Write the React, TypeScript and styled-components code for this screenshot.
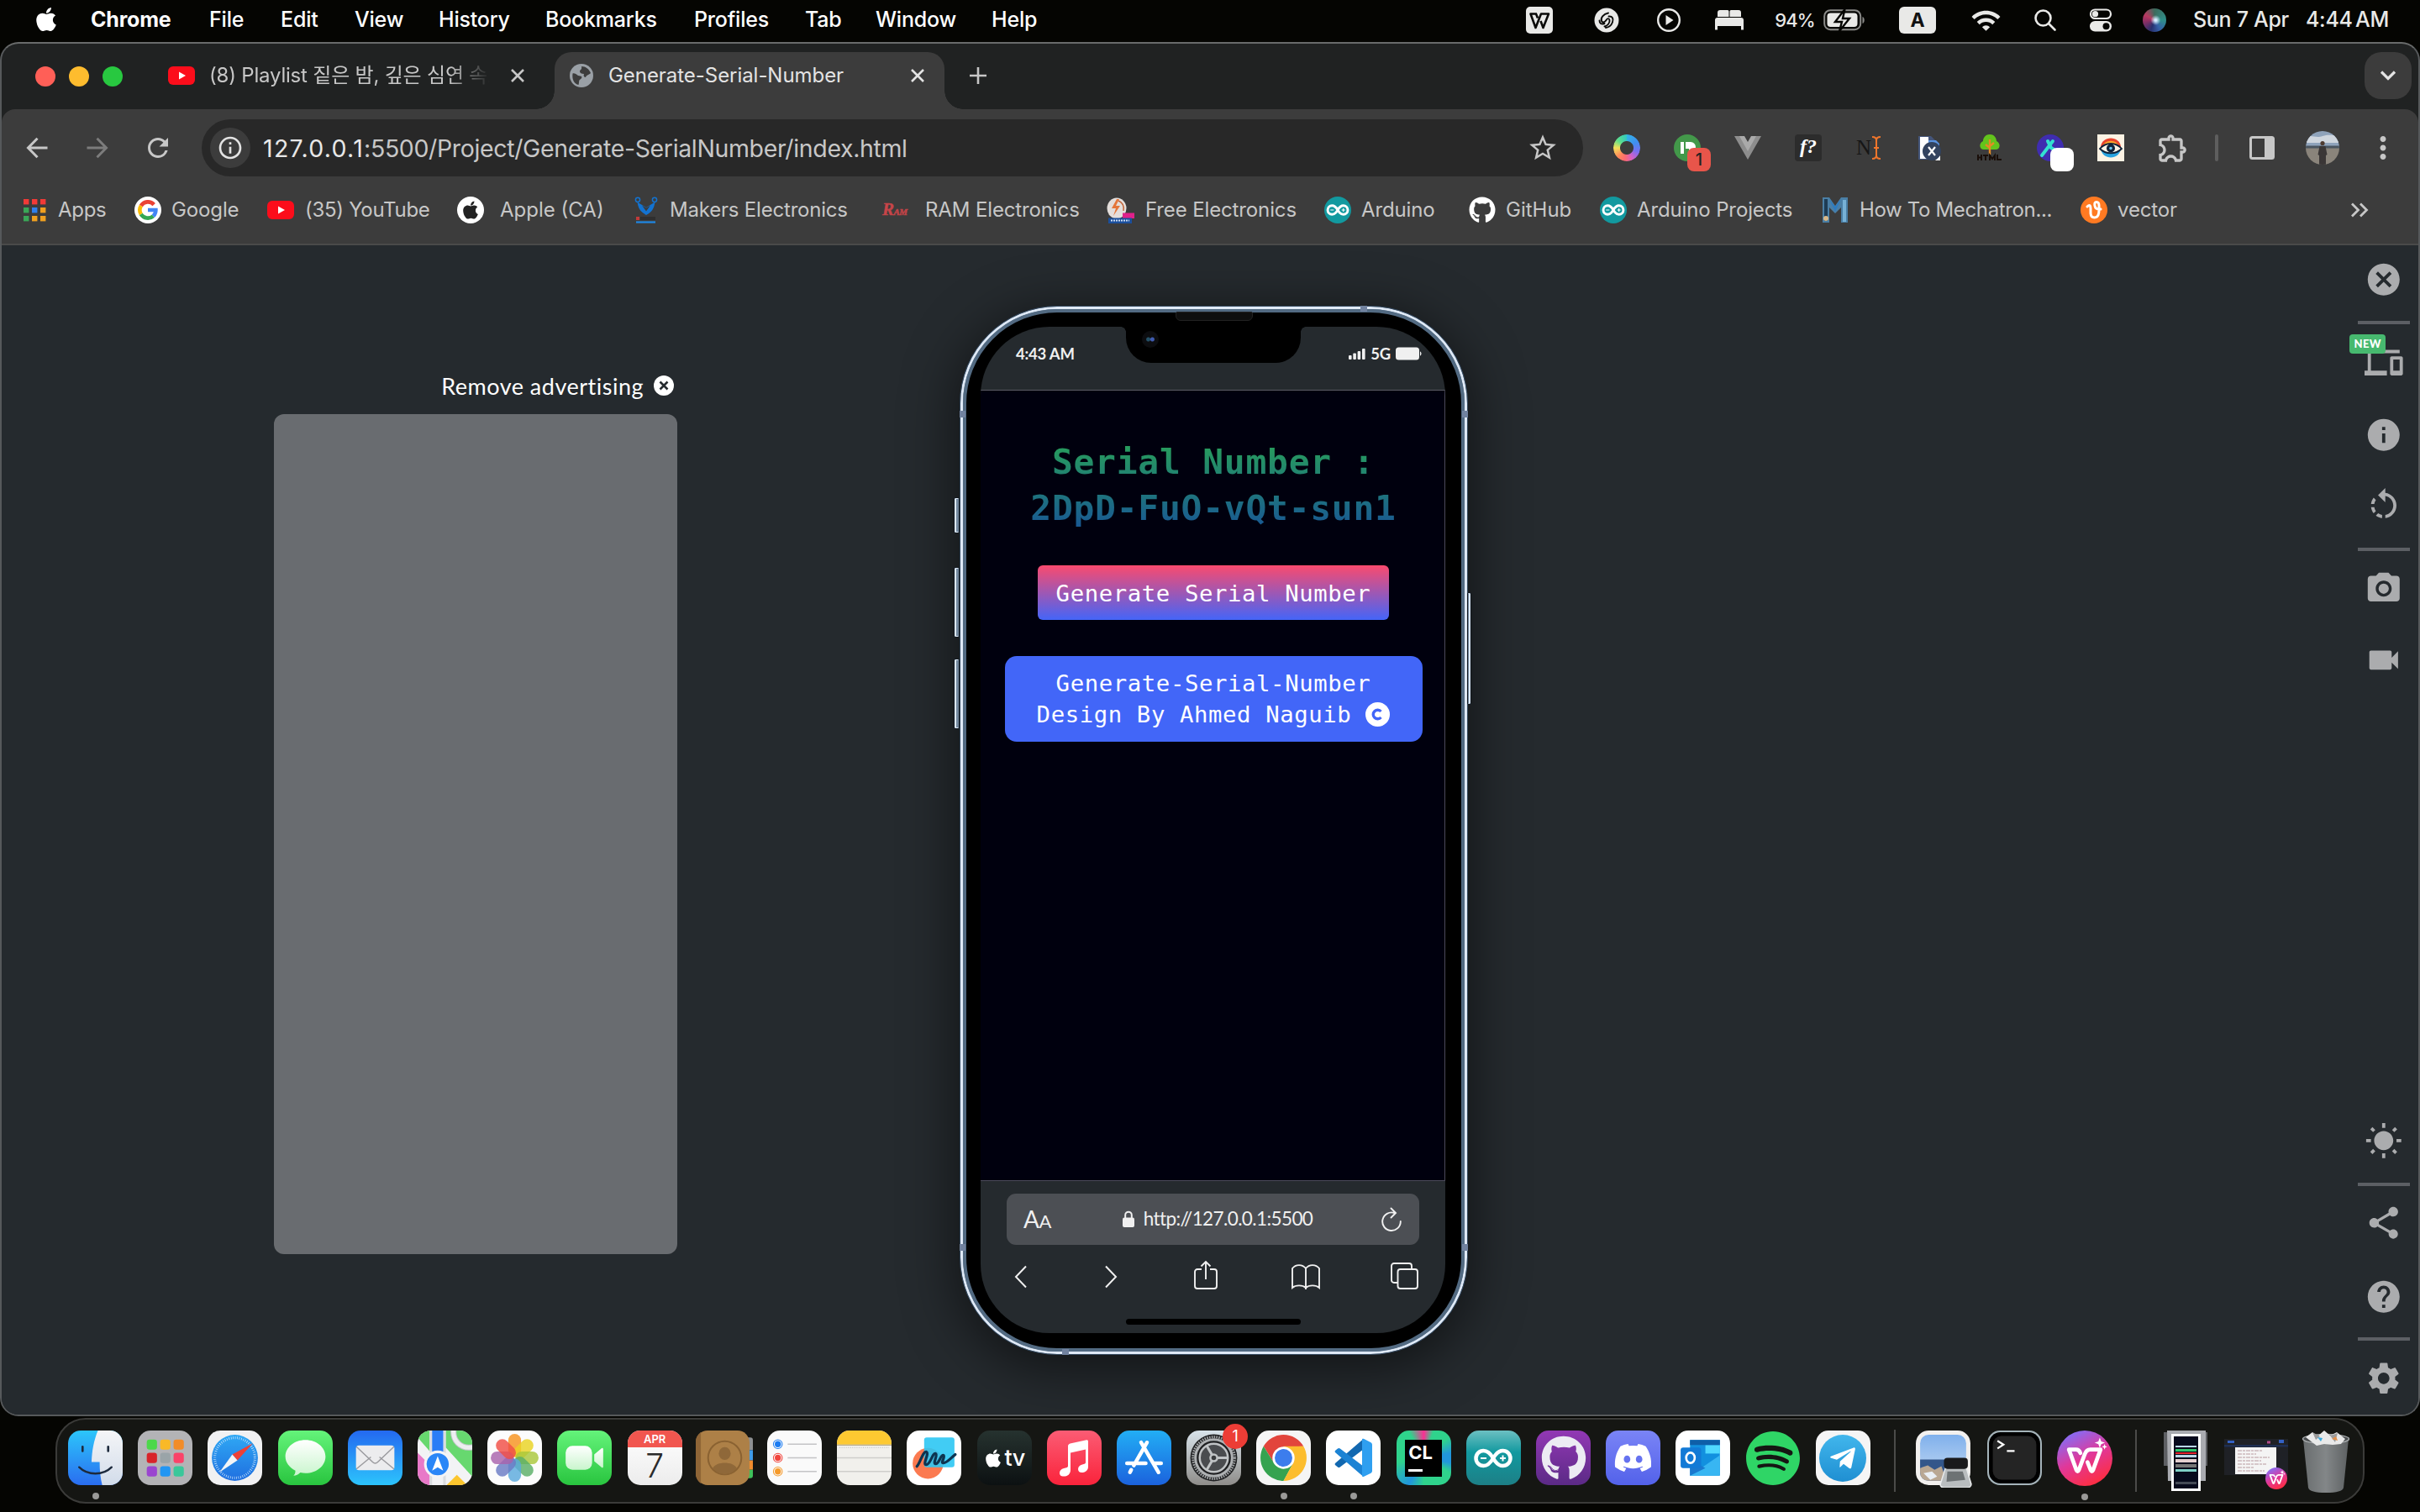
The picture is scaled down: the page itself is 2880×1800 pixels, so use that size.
import React from 'react';
import styled, { createGlobalStyle, css } from 'styled-components';
import { FaApple, FaGithub, FaDiscord, FaSpotify, FaTelegramPlane } from 'react-icons/fa';
import {
  MdCancel, MdDevices, MdInfo, MdRotateLeft, MdPhotoCamera, MdVideocam, MdWbSunny, MdShare,
  MdHelp, MdSettings, MdStarBorder, MdOutlineInfo, MdRefresh,
  MdMoreVert, MdOutlineExtension, MdWifi,
} from 'react-icons/md';

const GlobalStyle = createGlobalStyle`
  * { box-sizing: border-box; }
  html, body { margin: 0; background: #050502; }
  body { width: 2880px; height: 1800px; overflow: hidden; font-family: Inter, "Noto Sans CJK KR", sans-serif; }
  svg { display: block; flex: none; }
`;

const SANS = 'Inter, "Noto Sans CJK KR", sans-serif';
const AVENIR = 'Lato, "Open Sans", sans-serif';
const MONO = '"DejaVu Sans Mono", "Liberation Mono", monospace';

const Desktop = styled.div`
  width: 2880px;
  height: 1800px;
  display: flex;
  flex-direction: column;
  background: #050502;
  font-family: ${SANS};
`;

/* ---------- menu bar ---------- */

const MenuBar = styled.header`
  height: 50px;
  display: flex;
  justify-content: space-between;
  color: #fff;
`;
const MenuLeft = styled.nav`
  display: flex;
  align-items: center;
  height: 46px;
  padding-left: 39px;
`;
const MenuLogo = styled.div`
  width: 69px;
`;
const MenuItem = styled.span<{ $w: number; $bold?: boolean }>`
  width: ${p => p.$w}px;
  font-size: 25px;
  white-space: nowrap;
  font-weight: ${p => (p.$bold ? 700 : 500)};
  letter-spacing: -0.2px;
`;
const MenuRight = styled.div`
  display: flex;
  align-items: center;
  height: 48px;
  width: 1088px;
  color: #e9e9e7;
`;
const Slot = styled.div<{ $w: number }>`
  width: ${p => p.$w}px;
  flex: none;
  display: flex;
  align-items: center;
  justify-content: center;
`;
const Percent = styled.span`
  font-size: 22px;
  font-weight: 500;
  letter-spacing: -0.9px;
  padding-left: 8px;
`;
const InputBadge = styled.span`
  width: 44px;
  height: 32px;
  border-radius: 6px;
  background: #e9e9e7;
  color: #111;
  font-size: 23px;
  font-weight: 700;
  text-align: center;
  line-height: 33px;
`;
const Clock = styled.span<{ $w: number; $ws?: number }>`
  width: ${p => p.$w}px;
  padding-bottom: 2px;
  font-size: 25px;
  font-weight: 500;
  white-space: nowrap;
  letter-spacing: -0.3px;
  word-spacing: ${p => p.$ws ?? 0}px;
`;

/* ---------- browser window ---------- */

const BrowserWindow = styled.main`
  height: 1636px;
  border: 2px solid #56595b;
  border-top-color: #696b6b;
  border-radius: 22px;
  overflow: hidden;
  background: #202222;
  display: flex;
  flex-direction: column;
`;
const TabStrip = styled.div`
  height: 78px;
  flex: none;
  display: flex;
  padding-left: 40px;
  padding-right: 8px;
`;
const Lights = styled.div`
  display: flex;
  gap: 16px;
  align-items: center;
  width: 158px;
`;
const Light = styled.i<{ $c: string }>`
  width: 24px;
  height: 24px;
  border-radius: 50%;
  background: ${p => p.$c};
`;
const Tab = styled.div<{ $active?: boolean; $w: number }>`
  position: relative;
  display: flex;
  align-items: center;
  width: ${p => p.$w}px;
  height: 56px;
  margin-top: 10px;
  color: #c7c7c7;
  ${p => p.$active && css`
    height: 68px;
    padding-bottom: 12px;
    padding-left: 18px;
    background: #3c3c3c;
    color: #e3e3e3;
    border-radius: 20px 20px 0 0;
    &::before, &::after {
      content: '';
      position: absolute;
      bottom: 0;
      width: 22px;
      height: 22px;
    }
    &::before { left: -22px; background: radial-gradient(circle at 0 0, transparent 21.5px, #3c3c3c 22px); }
    &::after { right: -22px; background: radial-gradient(circle at 100% 0, transparent 21.5px, #3c3c3c 22px); }
  `}
`;
const TabTitle = styled.span<{ $w: number; $fade?: boolean }>`
  width: ${p => p.$w}px;
  margin-left: ${p => (p.$fade ? 17 : 18)}px;
  padding-bottom: 1px;
  font-size: 24px;
  line-height: 32px;
  white-space: nowrap;
  letter-spacing: ${p => (p.$fade ? -0.2 : -0.05)}px;
  ${p => p.$fade && css`
    mask-image: linear-gradient(90deg, #000 285px, transparent 334px);
  `}
`;
const NewTab = styled.div`
  width: 80px;
  display: flex;
  align-items: center;
  justify-content: center;
  height: 76px;
  color: #c7c7c7;
`;
const TabSearch = styled.div`
  margin: 10px 0 0 auto;
  width: 56px;
  height: 56px;
  border-radius: 20px;
  background: #3c3c3c;
  color: #e3e3e3;
  display: flex;
  align-items: center;
  justify-content: center;
`;
const Chrome = styled.div`
  height: 162px;
  flex: none;
  background: #3c3c3c;
  border-bottom: 2px solid #4a4a4a;
  border-radius: 16px 16px 0 0;
`;
const Toolbar = styled.div`
  display: flex;
  align-items: center;
  height: 92px;
  color: #c7c7c7;
  padding-left: 6px;
`;
const NavIcon = styled(Slot)<{ $dim?: boolean }>`
  color: ${p => (p.$dim ? '#7c7c7c' : '#c7c7c7')};
`;
const Omnibox = styled.div`
  width: 1644px;
  height: 68px;
  margin: 0 16px 0 16px;
  border-radius: 34px;
  background: #282828;
  display: flex;
  align-items: center;
  padding: 0 29px 0 10px;
`;
const SiteInfo = styled.div`
  width: 48px;
  height: 48px;
  border-radius: 50%;
  background: #3c3c3c;
  display: flex;
  align-items: center;
  justify-content: center;
  color: #e3e3e3;
`;
const Url = styled.span`
  flex: 1;
  margin-left: 15px;
  font-size: 28.5px;
  letter-spacing: -0.36px;
  color: #c7c7c7;
  b { font-weight: 400; color: #e8e8e8; letter-spacing: 1.3px; }
`;
const Bookmarks = styled.div`
  display: flex;
  align-items: center;
  height: 56px;
  color: #c7c7c7;
  padding-left: 25px;
`;
const Bookmark = styled.div<{ $w: number }>`
  width: ${p => p.$w}px;
  flex: none;
  display: flex;
  align-items: center;
`;
const BookmarkIcon = styled.div<{ $w: number }>`
  width: ${p => p.$w}px;
  flex: none;
`;
const BookmarkLabel = styled.span<{ $ls?: number }>`
  font-size: 24px;
  padding-bottom: 1px;
  white-space: nowrap;
  letter-spacing: ${p => p.$ls ?? -0.13}px;
`;
const Overflow = styled.div`
  margin-left: auto;
  margin-right: 59px;
`;

/* ---------- page ---------- */

const Content = styled.section`
  flex: 1;
  background: #252a2e;
  display: flex;
  align-items: flex-start;
`;
const AdColumn = styled.aside`
  width: 1140px;
  padding: 150px 0 0 324px;
`;
const AdLabel = styled.div`
  width: 480px;
  height: 34px;
  display: flex;
  align-items: center;
  justify-content: flex-end;
  gap: 12px;
  padding-right: 4px;
  color: #fff;
  font: 400 27px ${AVENIR};
  letter-spacing: 0.5px;
`;
const AdBox = styled.div`
  width: 480px;
  height: 1000px;
  margin-top: 17px;
  border-radius: 12px;
  background: #696c70;
`;

const Phone = styled.div`
  position: relative;
  width: 605px;
  height: 1249px;
  margin-top: 72px;
  border-radius: 116px;
  padding: 3px;
  background: #5b7188;
  border: 1px solid #33475c;
  box-shadow: inset 0 0 0 3px #dfe9f6, 0 12px 60px 6px rgba(0, 0, 0, 0.5);
`;
const Rim = styled.div`
  height: 100%;
  border-radius: 112px;
  border: 4px solid #526a82;
  background: #000;
  padding: 17px 19px 18px 17px;
  display: flex;
`;
const Screen = styled.div`
  flex: 1;
  border-radius: 82px;
  overflow: hidden;
  background: #252a2e;
  display: flex;
  flex-direction: column;
`;
const SideKey = styled.i<{ $right?: boolean; $y: number; $h: number }>`
  position: absolute;
  top: ${p => p.$y}px;
  height: ${p => p.$h}px;
  width: ${p => (p.$right ? 5 : 7)}px;
  ${p => (p.$right ? 'right: -5px;' : 'left: -8px;')}
  border-radius: 2px;
  background: #73889f;
  border: 1px solid #10161d;
  box-shadow: inset ${p => (p.$right ? '-1px' : '1px')} 0 0 1px #dbe7f5;
`;
const Band = styled.i<{ $x: number; $y: number; $w: number; $h: number }>`
  position: absolute;
  left: ${p => p.$x}px;
  top: ${p => p.$y}px;
  width: ${p => p.$w}px;
  height: ${p => p.$h}px;
  background: #71829f;
`;
const Notch = styled.div`
  position: absolute;
  left: 197px;
  top: 22px;
  width: 208px;
  height: 45px;
  border-radius: 0 0 30px 30px;
  background: #000;
  &::before, &::after {
    content: '';
    position: absolute;
    top: 2px;
    width: 6px;
    height: 6px;
  }
  &::before { left: -6px; background: radial-gradient(circle at 0 100%, transparent 5.5px, #000 6px); }
  &::after { right: -6px; background: radial-gradient(circle at 100% 100%, transparent 5.5px, #000 6px); }
`;
const Speaker = styled.i`
  position: absolute;
  left: 256px;
  top: 6px;
  width: 92px;
  height: 11px;
  border-radius: 2px 2px 6px 6px;
  border: 1px solid #222;
  background: #0e0e0e;
`;
const Camera = styled.i`
  position: absolute;
  left: 216px;
  top: 29px;
  width: 20px;
  height: 20px;
  border-radius: 50%;
  background: radial-gradient(circle at 62% 50%, #3f5bb0 0 2px, transparent 3px),
    radial-gradient(circle at 38% 50%, #245067 0 2px, transparent 3px), #0c0d10;
`;
const StatusBar = styled.div`
  height: 76px;
  flex: none;
  border-bottom: 1px solid #5b5c64;
  display: flex;
  justify-content: space-between;
  align-items: flex-start;
  padding: 20px 28px 0 42px;
  color: #f0f0f0;
  font: 700 18.5px/24px ${AVENIR};
  letter-spacing: -0.2px;
`;
const StatusRight = styled.div`
  display: flex;
  align-items: center;
  gap: 6px;
`;
const Page = styled.div`
  height: 941px;
  flex: none;
  background: #00000e;
  border-right: 1px solid #4c4a5a;
  border-bottom: 1px solid #4c4a5a;
  display: flex;
  flex-direction: column;
  align-items: center;
  padding: 58px 0 0 2px;
`;
const Serial = styled.h1`
  margin: 0;
  font: 700 41.3px/54.5px ${MONO};
  letter-spacing: 0.75px;
  text-align: center;
  color: transparent;
  background: linear-gradient(#28a158, #185596);
  background-clip: text;
  -webkit-background-clip: text;
  white-space: pre;
`;
const Generate = styled.button`
  margin-top: 41px;
  width: 418px;
  height: 65px;
  border: 0;
  padding: 1px 0 0;
  border-radius: 6px;
  background: linear-gradient(#fa4a6e, #4465f8);
  color: #fff;
  font: 400 27.3px ${MONO};
  letter-spacing: 0.6px;
`;
const Credit = styled.footer`
  margin-top: 43px;
  width: 497px;
  height: 102px;
  border-radius: 14px;
  background: #4266f8;
  color: #fff;
  font: 400 27.3px/37px ${MONO};
  letter-spacing: 0.6px;
  display: flex;
  flex-direction: column;
  align-items: center;
  justify-content: center;
`;
const CreditLine = styled.div`
  display: flex;
  align-items: center;
  height: 37px;
  gap: 17px;
`;
const SafariBar = styled.div`
  padding: 15px 31px 0;
  color: #f0f0f0;
`;
const SafariUrl = styled.div`
  height: 61px;
  border-radius: 11px;
  background: #4c4f54;
  display: flex;
  align-items: center;
  padding: 0 21px 0 20px;
`;
const TextSize = styled.span`
  font: 400 28px ${AVENIR};
  letter-spacing: -0.4px;
  padding-bottom: 1px;
  small { font-size: 22px; }
`;
const Host = styled.span`
  flex: 1;
  display: flex;
  align-items: center;
  justify-content: center;
  gap: 11px;
  font: 400 22.5px ${AVENIR};
  letter-spacing: -0.6px;
  padding: 0 0 2px 3px;
`;
const SafariNav = styled.div`
  height: 76px;
  display: flex;
  align-items: center;
`;
const HomeBar = styled.div`
  width: 208px;
  height: 7px;
  border-radius: 4px;
  background: #000;
  margin: 12px auto 0;
`;

const Tools = styled.aside`
  margin-left: auto;
  width: 76px;
  height: 1392px;
  padding-right: 6px;
  display: flex;
  flex-direction: column;
  align-items: center;
  color: #abacae;
`;
const Tool = styled.div<{ $h: number; $down?: number; $after?: number }>`
  position: relative;
  height: ${p => p.$h}px;
  padding-top: ${p => p.$down ?? 0}px;
  margin-bottom: ${p => p.$after ?? 0}px;
  flex: none;
  display: flex;
  align-items: center;
`;
const Rule = styled.hr`
  width: 62px;
  height: 4px;
  flex: none;
  margin: 0;
  border: 0;
  background: #5c5f64;
`;
const Spacer = styled.div`
  flex: 1;
`;
const NewBadge = styled.span`
  position: absolute;
  left: -18px;
  top: 12px;
  width: 43px;
  height: 23px;
  border-radius: 4px;
  background: #47b96f;
  color: #fff;
  font: 900 13px/22px ${AVENIR};
  letter-spacing: 0.4px;
  text-align: center;
`;

/* ---------- dock ---------- */

const Dock = styled.footer`
  margin: 2px 0 0 66px;
  width: 2748px;
  height: 102px;
  border: 2px solid #3b3b39;
  border-radius: 36px;
  background: #151613;
  display: flex;
  padding-left: 4px;
`;
const DockItem = styled.div`
  position: relative;
  width: 83.2px;
  flex: none;
  display: flex;
  flex-direction: column;
  align-items: center;
  padding-top: 13px;
`;
const Running = styled.i`
  width: 8px;
  height: 8px;
  border-radius: 50%;
  background: #9a9a98;
  margin-top: 9px;
`;
const DockRule = styled.i`
  width: 2px;
  height: 74px;
  margin: 12px 17px 0 19px;
  background: #4b4b49;
  flex: none;
`;
const Alert = styled.span`
  position: absolute;
  top: 5px;
  right: 1px;
  width: 30px;
  height: 30px;
  border-radius: 50%;
  background: #ec3d36;
  color: #fff;
  font-size: 18px;
  line-height: 30px;
  text-align: center;
`;
const Tile = styled.div<{ $bg: string; $round?: boolean; $size?: number }>`
  width: ${p => p.$size ?? 65}px;
  height: ${p => p.$size ?? 65}px;
  border-radius: ${p => (p.$round ? '50%' : '15px')};
  background: ${p => p.$bg};
  overflow: hidden;
  display: flex;
  align-items: center;
  justify-content: center;
  color: #fff;
`;
const Calendar = styled.div`
  width: 65px;
  height: 65px;
  border-radius: 15px;
  overflow: hidden;
  background: linear-gradient(#fff, #ececec);
  text-align: center;
  color: #2b2b2b;
`;
const Month = styled.div`
  height: 20px;
  background: #f1564f;
  color: #fff;
  font-size: 13px;
  font-weight: 600;
  line-height: 21px;
`;
const Day = styled.div`
  font-size: 39px;
  font-weight: 300;
  line-height: 43px;
`;
const TvLabel = styled.span`
  font-size: 27px;
  font-weight: 500;
  letter-spacing: -0.5px;
  margin-left: 1px;
`;
const ClionBox = styled.div`
  width: 44px;
  height: 44px;
  background: #000;
  color: #fff;
  padding: 4px 0 0 4px;
  font-size: 22px;
  line-height: 22px;
  font-weight: 700;
  &::after {
    content: '';
    display: block;
    width: 17px;
    height: 3px;
    margin-top: 9px;
    background: #fff;
  }
`;

/* ---------- drawn glyphs ---------- */

const Cross = () => (
  <svg width="18" height="18" viewBox="0 0 18 18" fill="none" stroke="currentColor" strokeWidth="2.600"><path d="M2 2l14 14M16 2L2 16" /></svg>
);
const Plus = () => (
  <svg width="20" height="20" viewBox="0 0 20 20" fill="none" stroke="currentColor" strokeWidth="2.600"><path d="M10 0v20M0 10h20" /></svg>
);
const ChevronDown = () => (
  <svg width="20" height="12" viewBox="0 0 20 12" fill="none" stroke="currentColor" strokeWidth="3.200"><path d="M2 1.500l8 8 8-8" /></svg>
);
const Arrow = ({ flip }: { flip?: boolean }) => (
  <svg width="26" height="26" viewBox="0 0 26 26" fill="none" stroke="currentColor" strokeWidth="3" transform={flip ? 'scale(-1 1)' : undefined}>
    <path d="M25.500 13H3M13.500 1.800L2.500 13l11 11.200" />
  </svg>
);
const YouTube = () => (
  <svg width="32" height="32" viewBox="0 0 32 32">
    <rect x="0" y="5" width="32" height="22" rx="6" fill="#fc0d1b" />
    <path d="M13 11.500v9l8-4.500z" fill="#fff" />
  </svg>
);
const Globe = () => (
  <svg width="28" height="28" viewBox="0 0 28 28">
    <circle cx="14" cy="14" r="14" fill="#9aa0a6" />
    <path d="M3.500 11.500c4-1 5 3 9 3 3 0 2 3 0 4-2 1-1 4-2 6.500-5-1-8-6-7-13.500zM14 3c5 0 9 3 11 8-2 2-5 2-6 5-2 0-3-2-2-4-3 0-5-1-5-3s3-2 2-6z" fill="#3c3c3c" />
  </svg>
);
const GoogleG = () => (
  <svg width="32" height="32" viewBox="0 0 32 32">
    <circle cx="16" cy="16" r="16" fill="#fff" />
    <g fill="none" strokeWidth="4.600">
      <path d="M23.200 9.600A9.600 9.600 0 0 0 7.800 11" stroke="#ea4335" />
      <path d="M7.800 11a9.800 9.800 0 0 0 0 10" stroke="#fbbc05" />
      <path d="M7.800 21a9.600 9.600 0 0 0 14.600 2.200" stroke="#34a853" />
      <path d="M22.400 23.200A9.500 9.500 0 0 0 25.400 16H16" stroke="#4285f4" />
    </g>
  </svg>
);
const AppsGrid = () => {
  const c = ['#f23a37', '#f23a37', '#f23a37', '#3aa757', '#2f80ed', '#f0a020', '#3aa757', '#f0a020', '#f0a020'];
  return (
    <svg width="28" height="28" viewBox="0 0 28 28">
      {c.map((f, i) => <rect key={i} x={1 + (i % 3) * 10} y={1 + Math.floor(i / 3) * 10} width="6.400" height="6.400" fill={f} />)}
    </svg>
  );
};
const Makers = () => (
  <svg width="28" height="32" viewBox="0 0 28 32">
    <path d="M3.500 6.500c1 8 4 12 10.500 15.500C20.500 18.500 23.500 14.500 24.500 6.500L14 13z" fill="#1373d1" />
    <path d="M9 10.500l5 7 5-7-5 3z" fill="#3c3c3c" />
    <circle cx="4" cy="3.800" r="2.600" fill="none" stroke="#1373d1" strokeWidth="1.500" />
    <circle cx="24" cy="3.800" r="2.600" fill="none" stroke="#1373d1" strokeWidth="1.500" />
    <path d="M2 24h4v4H2z" fill="#c23a3a" /><path d="M7 24h18v4H7z" fill="#2f2f2f" /><path d="M2 29.400h23v2.200H2z" fill="#1e88e5" />
  </svg>
);
const TextMark = styled.span`
  display: block;
  font: italic 700 21px/30px "Liberation Serif", serif;
  -webkit-text-stroke: 0.6px #b94246;
  color: #c9464a;
  letter-spacing: -0.5px;
  small { font-size: 11px; }
`;
const FreeElec = () => (
  <svg width="34" height="32" viewBox="0 0 34 32">
    <ellipse cx="12" cy="14" rx="11.500" ry="12.500" fill="#e4dedb" />
    <path d="M12 3l-6 11h5l-3 9 8-12h-5l4-8z" fill="#e5763a" />
    <path d="M14 5c5 2 7 6 6 12" fill="none" stroke="#c1663a" strokeWidth="1.500" />
    <rect x="19" y="19.500" width="14" height="6.500" fill="#e0218a" />
    <rect x="2" y="25.500" width="28" height="6.500" fill="#1b4f9c" />
    <path d="M5 28.500h22" stroke="#cfe0f5" strokeWidth="2" strokeDasharray="2 1" />
  </svg>
);
const InfinityMark = ({ w, sw }: { w: number; sw: number }) => (
  <svg width={w} height={w / 2} viewBox="0 0 48 24" fill="none" stroke="#fff">
    <path d="M24 12C20 5 16 3 12.500 3a9 9 0 0 0 0 18C16 21 20 19 24 12s8-9 11.500-9a9 9 0 0 1 0 18C32 21 28 19 24 12z" strokeWidth={sw} />
    <path d="M9 12h7M32 12h7M35.500 8.500v7" strokeWidth="2" />
  </svg>
);
const SmallRound = styled.div<{ $bg: string }>`
  width: 32px;
  height: 32px;
  border-radius: 50%;
  background: ${p => p.$bg};
  color: #fff;
  display: flex;
  align-items: center;
  justify-content: center;
`;
const Mechatron = () => (
  <svg width="32" height="32" viewBox="0 0 32 32">
    <path d="M1 1h8l7 10 7-10h8v30h-8V13l-7 7-7-7v18H1z" fill="#4a7fa6" />
    <path d="M3 3h4v26H3z" fill="#1d3c55" /><path d="M25 4h4v26h-4z" fill="#77b1d6" /><path d="M9 3l7 9 7-9-7 15z" fill="#2e7cc0" />
    <circle cx="5" cy="26" r="3" fill="#d9b98a" />
  </svg>
);
const Vecteezy = () => (
  <svg width="20" height="24" viewBox="0 0 20 24" fill="none" stroke="#fff" strokeWidth="3" strokeLinecap="round">
    <path d="M2 8c3-3 4-1 4 2v5c0 3.500 1.500 6 4.500 6 4 0 5.500-4 5.500-9V7c0-3-1-4.500-3-4.500S10.500 4 11 7s3 4.500 7 4" />
  </svg>
);

const MenuIconW = () => (
  <svg width="32" height="32" viewBox="0 0 32 32">
    <rect width="32" height="32" rx="5" fill="#e9e9e7" />
    <path d="M13 8.500H5.500l6 16.500 6.500-16.500h9L20.500 25l-3-8M12 8.500l2 5" fill="none" stroke="#0a0a08" strokeWidth="2.600" strokeLinejoin="round" />
  </svg>
);
const MenuSpiral = () => (
  <svg width="30" height="30" viewBox="0 0 30 30">
    <circle cx="15" cy="15" r="14.500" fill="#e9e9e7" />
    <path d="M17 6.500c-6 1-9.500 6-8 9.500 1.200 2.600 4 1.500 5.500-1s3.500-2.500 4 0c.6 3-2 6.500-6 7.500M17.500 10.500c4.500-.5 6 3 4.500 7s-4.500 6-8 6.500M12.500 19c-4 1.500-6-.5-6-3.500" fill="none" stroke="#0a0a08" strokeWidth="1.900" strokeLinecap="round" />
  </svg>
);
const MenuPlay = () => (
  <svg width="30" height="30" viewBox="0 0 30 30">
    <circle cx="15" cy="15" r="12.800" fill="none" stroke="#e9e9e7" strokeWidth="2.400" />
    <path d="M11.500 9v12l9-6z" fill="#e9e9e7" />
  </svg>
);
const MenuBed = () => (
  <svg width="36" height="26" viewBox="0 0 36 26" fill="#e9e9e7">
    <path d="M4 9V4a3 3 0 0 1 3-3h9a1.500 1.500 0 0 1 1.500 1.500V9zM18.500 9V2.500A1.500 1.500 0 0 1 20 1h9a3 3 0 0 1 3 3v5zM1 13a3 3 0 0 1 3-3h28a3 3 0 0 1 3 3v11.500h-3V20H4v4.500H1z" />
  </svg>
);
const Battery = () => (
  <svg width="50" height="26" viewBox="0 0 50 26">
    <rect x="1.200" y="1.200" width="43" height="23" rx="7" fill="none" stroke="#8a8a88" strokeWidth="2" />
    <rect x="4.500" y="4.500" width="36" height="16.500" rx="4" fill="#e9e9e7" />
    <path d="M46.500 9v8c3-1 3-7 0-8z" fill="#8a8a88" />
    <path d="M25.500 0L14 15h8l-3 11 12-15h-8z" fill="#e9e9e7" stroke="#050502" strokeWidth="2.400" />
  </svg>
);
const SearchGlyph = () => (
  <svg width="28" height="28" viewBox="0 0 28 28" fill="none" stroke="#e9e9e7" strokeWidth="2.600" strokeLinecap="round">
    <circle cx="11.500" cy="11.500" r="9" /><path d="M18.500 18.500l7 7" />
  </svg>
);
const ControlGlyph = () => (
  <svg width="28" height="28" viewBox="0 0 28 28">
    <rect x="2" y="1.500" width="24" height="10.500" rx="5.200" fill="none" stroke="#e9e9e7" strokeWidth="2.200" />
    <circle cx="7.500" cy="6.700" r="3.600" fill="#e9e9e7" />
    <rect x="1" y="15" width="26" height="12.500" rx="6.200" fill="#e9e9e7" />
    <circle cx="20.500" cy="21.200" r="4" fill="#050502" />
  </svg>
);
const SiriBall = styled.i`
  width: 28px;
  height: 28px;
  margin-left: 2px;
  border-radius: 50%;
  background: radial-gradient(circle at 55% 50%, #d8ecff 0 1px, transparent 6px),
    conic-gradient(#3d6a5c, #2f8f8a 90deg, #3560a8 150deg, #28306e 200deg, #8a2f64 260deg, #b83a60 300deg, #3d6a5c);
`;

const ColorRing = styled.i`
  width: 32px;
  height: 32px;
  border-radius: 50%;
  background: conic-gradient(#33b3e6, #3f8ff0 60deg, #7a6ff0 110deg, #d060c8 150deg, #ff6a70 190deg, #ff8a5a 225deg, #f2e05a 270deg, #5fe08a 310deg, #33c9c0);
  mask: radial-gradient(circle, transparent 7.5px, #000 8.5px);
`;
const ExtBadged = styled.div<{ $bg: string }>`
  position: relative;
  width: 32px;
  height: 32px;
  border-radius: 50%;
  background: ${p => p.$bg};
`;
const Count = styled.span<{ $bg: string }>`
  position: absolute;
  left: 16px;
  top: 16px;
  width: 28px;
  height: 28px;
  border-radius: 8px;
  background: ${p => p.$bg};
  color: #222;
  font-size: 20px;
  font-weight: 500;
  line-height: 28px;
  text-align: center;
`;
const FTile = styled.div`
  width: 32px;
  height: 32px;
  border-radius: 4px;
  background: #2c2c2c;
  color: #fff;
  font: italic 700 24px/29px "Liberation Serif", serif;
  text-align: center;
`;
const SerifN = styled.div`
  color: #161616;
  font: 400 25px/32px "Liberation Serif", serif;
  display: flex;
  align-items: center;
`;
const Avatar = styled.div`
  width: 40px;
  height: 40px;
  border-radius: 50%;
  overflow: hidden;
`;

const DOCK_SVG = { width: 65, height: 65, viewBox: '0 0 64 64' };

const Finder = () => (
  <svg {...DOCK_SVG}>
    <defs>
      <linearGradient id="fa" x2="0" y2="1"><stop stopColor="#2cc6fb" /><stop offset="1" stopColor="#2a6df0" /></linearGradient>
      <linearGradient id="fb" x2="0" y2="1"><stop stopColor="#f4f5f7" /><stop offset="1" stopColor="#d2dcea" /></linearGradient>
      <clipPath id="fc"><rect width="64" height="64" rx="15" /></clipPath>
    </defs>
    <g clipPath="url(#fc)">
      <rect width="64" height="64" fill="url(#fa)" />
      <path d="M35 0c-5 12-7 24-7.500 37H37c0 10 1 19 3 27h24V0z" fill="url(#fb)" />
      <path d="M17 19v5M47 19v5" stroke="#1d2a3c" strokeWidth="2.600" strokeLinecap="round" />
      <path d="M13 43c10 10 28 10 38 0" fill="none" stroke="#1d2a3c" strokeWidth="2.400" strokeLinecap="round" />
    </g>
  </svg>
);
const Launchpad = () => {
  const c = ['#4cd84a', '#f9b927', '#f28c28', '#d8232a', '#9aa4a8', '#fb4269', '#9a45d0', '#2296f3', '#3ac79a'];
  return (
    <svg {...DOCK_SVG}>
      <rect width="64" height="64" rx="15" fill="#b3b3b6" />
      {c.map((f, i) => <rect key={i} x={10.5 + (i % 3) * 15.7} y={10.5 + Math.floor(i / 3) * 15.7} width="12" height="12" rx="3.200" fill={f} />)}
    </svg>
  );
};
const Safari = () => (
  <svg {...DOCK_SVG}>
    <defs><linearGradient id="sf" x2="0" y2="1"><stop stopColor="#2fa8f4" /><stop offset="1" stopColor="#1f6fe0" /></linearGradient></defs>
    <rect width="64" height="64" rx="15" fill="#f1f1f2" />
    <circle cx="32" cy="32" r="27" fill="url(#sf)" />
    <circle cx="32" cy="32" r="23.500" fill="none" stroke="#cfe8fc" strokeWidth="3" strokeDasharray="0.700 1.750" />
    <path d="M53 15L29 28l6 7z" fill="#ee4037" /><path d="M14 49l15-21 6 7z" fill="#f3f5f7" />
  </svg>
);
const Messages = () => (
  <svg {...DOCK_SVG}>
    <defs><linearGradient id="ms" x2="0" y2="1"><stop stopColor="#64f37a" /><stop offset="1" stopColor="#29c53f" /></linearGradient>
      <linearGradient id="mt" x2="0" y2="1"><stop stopColor="#fff" /><stop offset="1" stopColor="#c9f5cd" /></linearGradient></defs>
    <rect width="64" height="64" rx="15" fill="url(#ms)" />
    <path d="M32 11c13 0 23.500 8.500 23.500 19.500S45 50 32 50c-2 0-4-.2-6-.7-2 2.200-5 3.500-8 3.700 1.500-1.500 2.300-3.500 2.200-6C13 43 8.500 37.500 8.500 30.500 8.500 19.500 19 11 32 11z" fill="url(#mt)" />
  </svg>
);
const Mail = () => (
  <svg {...DOCK_SVG}>
    <defs><linearGradient id="ml" x2="0" y2="1"><stop stopColor="#2469f0" /><stop offset="1" stopColor="#2cc4fc" /></linearGradient></defs>
    <rect width="64" height="64" rx="15" fill="url(#ml)" />
    <rect x="9.500" y="17.500" width="45" height="29" rx="3.500" fill="#ececee" />
    <path d="M10 45l17-14M54 45L37 31M10 19l19 18c2 2 4 2 6 0l19-18" fill="none" stroke="#9a9a9e" strokeWidth="1.400" />
  </svg>
);
const MapsIcon = () => (
  <svg {...DOCK_SVG}>
    <defs><clipPath id="mp"><rect width="64" height="64" rx="15" /></clipPath></defs>
    <g clipPath="url(#mp)">
      <rect width="64" height="64" fill="#f2f3f5" />
      <path d="M0 0h14v24L0 8zM33 0h31v54L33 20z" fill="#67d86f" />
      <circle cx="60" cy="2" r="18" fill="none" stroke="#c3c7cb" strokeWidth="7" />
      <circle cx="60" cy="2" r="18" fill="none" stroke="#eceef0" strokeWidth="5" />
      <path d="M0 26l14 14v24H0z" fill="#e879c8" /><path d="M34 64l12-12 12 12z" fill="#fcc62e" />
      <path d="M14 0h3v64h-3zM30 0h3v64h-3z" fill="#dadcdf" /><path d="M17 0h13v30H17z" fill="#2b7df6" />
      <circle cx="23.500" cy="39.500" r="16" fill="#f4f4f6" /><circle cx="23.500" cy="39.500" r="13" fill="#2a86f7" />
      <path d="M23.500 30l6.500 17-6.500-4-6.500 4z" fill="#fff" />
    </g>
  </svg>
);
const Photos = () => {
  const c = ['#f6921e', '#e9d322', '#a9c73b', '#5aaf66', '#5aa9dd', '#6a7bc4', '#a863ac', '#f04e45'];
  return (
    <svg {...DOCK_SVG}>
      <rect width="64" height="64" rx="15" fill="#fcfcfc" />
      {c.map((f, i) => <rect key={i} x="24.500" y="4" width="15" height="27" rx="7.500" fill={f} opacity="0.82" transform={`rotate(${i * 45} 32 32)`} />)}
    </svg>
  );
};
const FaceTime = () => (
  <svg {...DOCK_SVG}>
    <rect width="64" height="64" rx="15" fill="url(#ms)" />
    <rect x="10" y="18" width="31" height="28" rx="8" fill="url(#mt)" /><path d="M43.500 28l8.500-7c1-1 2-.5 2 1v20c0 1.500-1 2-2 1l-8.500-7z" fill="url(#mt)" />
  </svg>
);
const Contacts = () => (
  <svg width="68" height="65" viewBox="0 0 67 64">
    <path d="M60 8h4a3 3 0 0 1 3 3v12h-7z" fill="#8e9092" /><path d="M60 23h7v12h-7z" fill="#3f9be8" /><path d="M60 35h7v11h-7z" fill="#f08c2e" /><path d="M60 46h7v7a3 3 0 0 1-3 3h-4z" fill="#3fc15a" />
    <rect width="63" height="64" rx="14" fill="#ad8047" /><path d="M0 14A14 14 0 0 1 6 2v60a14 14 0 0 1-6-12z" fill="#8f6536" />
    <circle cx="34" cy="32" r="19.500" fill="none" stroke="#8a6232" strokeWidth="2" />
    <ellipse cx="34" cy="27" rx="7" ry="7.500" fill="#8f6839" /><path d="M20 44c4-8 24-8 28 0-6 9-22 9-28 0z" fill="#8f6839" />
  </svg>
);
const Reminders = () => (
  <svg {...DOCK_SVG}>
    <rect width="64" height="64" rx="15" fill="#fafafa" />
    {['#1b7cf2', '#f1453d', '#f59a2b'].map((f, i) => (
      <g key={f}>
        <circle cx="12.500" cy={16 + i * 16} r="3.600" fill={f} /><circle cx="12.500" cy={16 + i * 16} r="5.200" fill="none" stroke={f} strokeWidth="1" />
        <path d={`M24 ${16 + i * 16}h34`} stroke="#c4c4c6" strokeWidth="1.600" />
      </g>
    ))}
  </svg>
);
const Notes = () => (
  <svg {...DOCK_SVG}>
    <rect width="64" height="64" rx="15" fill="#f1f0ec" />
    <path d="M0 16.500V15A15 15 0 0 1 15 0h34a15 15 0 0 1 15 15v1.500z" fill="#fdc931" />
    <path d="M0 17.200h64" stroke="#b6ab8b" strokeWidth="1.200" /><path d="M3 20h58" stroke="#bbb" strokeWidth="1" strokeDasharray="1 1.500" />
    <path d="M0 32h64M0 48h64" stroke="#cfcecb" strokeWidth="1.400" />
  </svg>
);
const Freeform = () => (
  <svg {...DOCK_SVG}>
    <rect width="64" height="64" rx="15" fill="#fff" />
    <circle cx="25" cy="38.500" r="18" fill="#fb7a50" /><rect x="20.500" y="8" width="35.500" height="35" rx="3" fill="#2cc7f3" opacity="0.900" />
    <path d="M12 42c4-4 7-18 11-17 4 2-5 15 0 15s7-14 11-13c3 1-4 12 0 12s6-11 9-10c3 2-4 9 0 9s7-4 14-10" fill="none" stroke="#0e3450" strokeWidth="3.200" strokeLinecap="round" />
  </svg>
);
const Music = () => (
  <svg width="36" height="44" viewBox="0 0 36 44" fill="#fff">
    <path d="M11 7.500c0-1.500 1-2.500 2.500-3L33 .2c1.200-.2 2 .5 2 1.700V32c0 4-2.500 6.500-6.500 7-3.500.5-5.500-1.500-5.500-4 0-3 2-5 5-5.600l2.500-.6c1-.3 1.500-1 1.500-2V11.500l-18 4V36c0 4-2.500 7-6.500 7.500C2.500 44 1 42 1 39.500c0-3 2-5 5-5.600l3-.7c1.200-.3 2-1 2-2z" />
  </svg>
);
const AppStore = () => (
  <svg {...DOCK_SVG} fill="none" stroke="#fff" strokeWidth="4.400" strokeLinecap="round">
    <path d="M28.500 14L49 49M35.500 14L20 41M17 46l-1.500 3M12 38.500h22M43 38.500h9" />
  </svg>
);
const SettingsApp = () => (
  <svg {...DOCK_SVG}>
    <defs><linearGradient id="st" x2="0" y2="1"><stop stopColor="#d8e3ea" /><stop offset="1" stopColor="#8f8d8a" /></linearGradient></defs>
    <rect width="64" height="64" rx="15" fill="url(#st)" />
    <circle cx="32" cy="32" r="27.500" fill="#1f2022" />
    <circle cx="32" cy="32" r="24.500" fill="none" stroke="#9fa2a4" strokeWidth="3" strokeDasharray="1.600 1.200" />
    <circle cx="32" cy="32" r="21.500" fill="none" stroke="#aeb1b3" strokeWidth="3" />
    <circle cx="32" cy="32" r="16.500" fill="#4a4c4f" stroke="#c0c3c5" strokeWidth="2.500" />
    <circle cx="32" cy="32" r="4" fill="#3a3c3e" stroke="#c0c3c5" strokeWidth="2.500" />
    <path d="M36 32h12.500M30 35.500l-6.500 11M30 28.500l-6.500-11" stroke="#c0c3c5" strokeWidth="3" />
  </svg>
);
const ChromeApp = () => (
  <svg {...DOCK_SVG}>
    <rect width="64" height="64" rx="15" fill="#f5f5f5" />
    <g transform="translate(32 32)">
      <path d="M-23.400 -13.500A27 27 0 0 1 23.400 -13.500L0 -12.500-11 6.500z" fill="#e2453c" />
      <path d="M-23.400 -13.500A27 27 0 0 0 0 27L11 7-11 6.500z" fill="#35a350" />
      <path d="M23.400 -13.500A27 27 0 0 1 0 27L11 6.500 0 -13.500z" fill="#fcbd2e" />
      <circle r="13" fill="#fff" /><circle r="10.300" fill="#3c7ded" />
    </g>
  </svg>
);
const VSCode = () => (
  <svg width="47" height="47" viewBox="0 0 47 47" strokeLinejoin="round">
    <path d="M35 1.500L2.500 29.500c-1.200 1-1.200 2 0 3l2.500 2c1 .8 1.800.7 2.800 0L36 13z" fill="#1268b0" />
    <path d="M35 45.500L2.500 17.500c-1.200-1-1.200-2 0-3l2.500-2c1-.8 1.800-.7 2.800 0L36 34z" fill="#1c83d4" />
    <path d="M34 1.200c.8-.6 1.500-.5 2.300-.1l7.700 4c1.300.7 2 1.600 2 3v31c0 1.400-.7 2.300-2 3l-7.700 3.700c-.8.4-1.500.4-2.300-.2z" fill="#2f9ff0" />
  </svg>
);
const Outlook = () => (
  <svg {...DOCK_SVG}>
    <rect width="64" height="64" rx="15" fill="#fff" />
    <path d="M17 11h35v42H17z" fill="#1290df" /><path d="M35 17h17v10H35z" fill="#50d9ff" /><path d="M17 11h35v6H17z" fill="#0f5fa8" />
    <path d="M17 53l35-24v22c0 1-1 2-2 2z" fill="#38b6f2" /><path d="M17 34l18 10-18 9z" fill="#1a79cf" />
    <rect x="6" y="20" width="24" height="24" rx="3" fill="#127ad6" /><ellipse cx="17.500" cy="32" rx="5" ry="6" fill="none" stroke="#fff" strokeWidth="2.600" />
  </svg>
);
const Preview = () => (
  <svg width="70" height="68" viewBox="0 0 69 67">
    <defs><linearGradient id="pv" x2="0" y2="1"><stop stopColor="#7fb0ec" /><stop offset="1" stopColor="#c7dbf2" /></linearGradient></defs>
    <rect x="1" width="64" height="64" rx="15" fill="#f2f0ee" />
    <rect x="6" y="5" width="54" height="54" rx="10" fill="url(#pv)" />
    <path d="M6 34h54v15a10 10 0 0 1-10 10H16A10 10 0 0 1 6 49z" fill="#33568a" />
    <path d="M6 44l9-3 8 5 8-4 6 17H16A10 10 0 0 1 6 49z" fill="#b9a793" /><path d="M10 50l10-2 6 6-8 4z" fill="#e9eef4" />
    <path d="M36 43h24l6 20c0 3-3 4-5 4H34c-3 0-5-2-4-5z" fill="#b9bdbf" stroke="#e9ebec" strokeWidth="1.500" />
    <path d="M38 48h18l3 10-22 2z" fill="#6d7274" /><rect x="34" y="32" width="28" height="13" rx="4" fill="#19191b" />
  </svg>
);
const TerminalApp = () => (
  <svg {...DOCK_SVG}>
    <rect width="64" height="64" rx="15" fill="#a5b4ba" /><rect x="2" y="2" width="60" height="60" rx="13.500" fill="#000" />
    <rect x="6.500" y="6.500" width="51" height="51" rx="10" fill="#242424" />
    <path d="M12 12l7 4.500-7 4.500" fill="none" stroke="#fff" strokeWidth="2.200" /><path d="M23 24h9" stroke="#fff" strokeWidth="2.200" />
  </svg>
);
const WpsApp = ({ size }: { size: number }) => (
  <svg width={size} height={size} viewBox="0 0 70 70">
    <defs><linearGradient id="wp" x1="0.200" x2="0.700" y2="1"><stop stopColor="#7b72ff" /><stop offset="0.500" stopColor="#e0389a" /><stop offset="1" stopColor="#ff2d3c" /></linearGradient></defs>
    <circle cx="35" cy="35" r="35" fill="url(#wp)" />
    <g fill="none" stroke="#fff" strokeWidth="5" strokeLinejoin="round" strokeLinecap="round">
      <path d="M24 24H15l9.500 26c.8 2 2.200 2 3 0L35 30c1.500-4 3-6 7-6h13l-9.500 26c-.8 2-2.200 2-3 0L38.500 40M24 24c3 0 4.500 1.500 5.500 4.500" />
    </g>
    <path d="M54 9l1.800 4.700 4.700 1.800-4.700 1.800L54 22l-1.800-4.700-4.700-1.800 4.700-1.800zM60 17l1 2.500 2.500 1-2.500 1L60 24l-1-2.500-2.500-1 2.500-1z" fill="#fff" />
  </svg>
);
const PhoneShot = () => (
  <svg width="54" height="72" viewBox="0 0 54 72">
    <path d="M0 2h52v40H0z" fill="#5d5f63" /><path d="M4 0h46v60H5z" fill="#a9abb0" />
    <rect x="9" y="4" width="35" height="68" fill="#fff" /><rect x="12" y="7" width="29" height="62" fill="#070a1c" />
    <path d="M14 18h25v2H14zM14 29h25v3H14z" fill="#b9d5e6" /><path d="M14 22h25v3H14z" fill="#32c46b" /><path d="M14 26h25v2H14z" fill="#e4242b" />
    <path d="M14 34h25v4H14z" fill="#e4cfcf" /><path d="M14 40h25v4H14z" fill="#777" /><path d="M14 46h25v3H14z" fill="#7fcfc6" /><path d="M14 61h25v3H14z" fill="#444a55" />
  </svg>
);
const WindowShotBox = styled.div`
  position: relative;
  padding-top: 10px;
`;
const MiniWps = styled.div`
  position: absolute;
  right: 1px;
  bottom: -17px;
`;
const WindowShot = () => (
  <svg width="76" height="43" viewBox="0 0 76 43">
    <rect width="76" height="43" fill="#1f2126" /><path d="M0 7h76v2.500H0z" fill="#1f2f52" /><path d="M4 2h8v3H4z" fill="#3461c4" /><path d="M51 2.500h4v3h-4z" fill="#b04a8a" /><path d="M65 1h6v4h-6z" fill="#3461c4" />
    <rect x="13" y="10" width="49" height="32" fill="#f4f4f4" />
    <path d="M16 14h30M16 18h22M16 22h38M16 26h28M16 30h34M16 34h20M16 38h32" stroke="#b89a9f" strokeWidth="1" strokeDasharray="5 1 3 1" />
  </svg>
);
const Trash = () => (
  <svg width="58" height="74" viewBox="0 0 58 74">
    <defs><linearGradient id="tr"><stop stopColor="#737779" /><stop offset="0.500" stopColor="#8f9395" /><stop offset="1" stopColor="#65696b" /></linearGradient></defs>
    <path d="M2 10h54l-6 58c-1 4-8 6-21 6S9 72 8 68z" fill="url(#tr)" opacity="0.900" />
    <ellipse cx="29" cy="10" rx="27.500" ry="5.500" fill="#4a4d4f" stroke="#a7abad" strokeWidth="1.500" />
    <path d="M5 8l8-6 6 5 8-7 7 6 8-4 10 8-5 6-10 1-10-1-9 2z" fill="#e9e9e9" />
    <path d="M13 2l4 9 5-4zM34 6l6 8 3-11z" fill="#9b9b9b" /><path d="M19 8l6 1-2 4z" fill="#35a8dd" /><path d="M36 10l5-3 2 5z" fill="#e3914c" />
  </svg>
);

const MENU: [string, number][] = [
  ['Chrome', 141], ['File', 85], ['Edit', 88], ['View', 100], ['History', 127],
  ['Bookmarks', 177], ['Profiles', 132], ['Tab', 84], ['Window', 138], ['Help', 80],
];

const APP_LIST: { icon: React.ReactNode; running?: boolean; alert?: string }[] = [
  { icon: <Finder />, running: true },
  { icon: <Launchpad /> },
  { icon: <Safari /> },
  { icon: <Messages /> },
  { icon: <Mail /> },
  { icon: <MapsIcon /> },
  { icon: <Photos /> },
  { icon: <FaceTime /> },
  { icon: <Calendar><Month>APR</Month><Day>7</Day></Calendar> },
  { icon: <Contacts /> },
  { icon: <Reminders /> },
  { icon: <Notes /> },
  { icon: <Freeform /> },
  { icon: <Tile $bg="linear-gradient(#26322f,#0c1112)"><FaApple size={24} /><TvLabel>tv</TvLabel></Tile> },
  { icon: <Tile $bg="linear-gradient(#fb5c74,#fa233b)"><Music /></Tile> },
  { icon: <Tile $bg="linear-gradient(#22aef5,#1b62dd)"><AppStore /></Tile> },
  { icon: <SettingsApp />, alert: '1' },
  { icon: <ChromeApp />, running: true },
  { icon: <Tile $bg="#fff"><VSCode /></Tile>, running: true },
  { icon: <Tile $bg="conic-gradient(from 330deg,#2fd38c,#fb2f93 30deg,#2fd38c 50deg,#2fd38c 80deg,#2196dd 110deg,#2196dd 130deg,#2fd38c 150deg,#2fd38c 210deg,#2196dd 240deg,#2fd38c 290deg)"><ClionBox>CL</ClionBox></Tile> },
  { icon: <Tile $bg="linear-gradient(#6cc0c2,#12999f 40%,#1d7f86)"><InfinityMark w={48} sw={4.5} /></Tile> },
  { icon: <Tile $bg="linear-gradient(#9238b4,#5b2a86)"><FaGithub size={54} color="#ecebf3" /></Tile> },
  { icon: <Tile $bg="linear-gradient(#7a84f6,#5362ea)"><FaDiscord size={47} /></Tile> },
  { icon: <Outlook /> },
  { icon: <FaSpotify size={66} color="#2fd566" /> },
  { icon: <Tile $bg="#f5f5f5"><Tile $bg="linear-gradient(#41b6ec,#1f8fd2)" $round $size={56}><FaTelegramPlane size={34} /></Tile></Tile> },
];

const arduino = <SmallRound $bg="#12999f"><InfinityMark w={28} sw={5} /></SmallRound>;

const BOOKMARKS: { icon: React.ReactNode; iw: number; label: string; w: number; ls?: number }[] = [
  { icon: <AppsGrid />, iw: 42, label: 'Apps', w: 133, ls: -0.3 },
  { icon: <GoogleG />, iw: 44, label: 'Google', w: 158 },
  { icon: <YouTube />, iw: 45, label: '(35) YouTube', w: 226, ls: -0.3 },
  { icon: <SmallRound $bg="#fff"><FaApple size={24} color="#222" /></SmallRound>, iw: 51, label: 'Apple (CA)', w: 211, ls: 0 },
  { icon: <Makers />, iw: 42, label: 'Makers Electronics', w: 295, ls: -0.2 },
  { icon: <TextMark>R<small>AM</small></TextMark>, iw: 51, label: 'RAM Electronics', w: 267 },
  { icon: <FreeElec />, iw: 46, label: 'Free Electronics', w: 259 },
  { icon: arduino, iw: 44, label: 'Arduino', w: 172 },
  { icon: <FaGithub size={32} color="#fff" />, iw: 44, label: 'GitHub', w: 156, ls: 0 },
  { icon: arduino, iw: 44, label: 'Arduino Projects', w: 264 },
  { icon: <Mechatron />, iw: 45, label: 'How To Mechatron...', w: 308, ls: -0.35 },
  { icon: <SmallRound $bg="#ff7a22"><Vecteezy /></SmallRound>, iw: 44, label: 'vector', w: 140 },
];

const ICON = 45.6;

export default function App() {
  return (
    <Desktop>
      <GlobalStyle />
      <MenuBar>
        <MenuLeft>
          <MenuLogo><FaApple size={32} /></MenuLogo>
          {MENU.map(([t, w], i) => <MenuItem key={t} $w={w} $bold={i === 0}>{t}</MenuItem>)}
        </MenuLeft>
        <MenuRight>
          <Slot $w={80}><MenuIconW /></Slot>
          <Slot $w={80}><MenuSpiral /></Slot>
          <Slot $w={68}><MenuPlay /></Slot>
          <Slot $w={76}><MenuBed /></Slot>
          <Slot $w={72}><Percent>94%</Percent></Slot>
          <Slot $w={54}><Battery /></Slot>
          <Slot $w={120}><InputBadge>A</InputBadge></Slot>
          <Slot $w={42}><MdWifi size={37} /></Slot>
          <Slot $w={100}><SearchGlyph /></Slot>
          <Slot $w={32}><ControlGlyph /></Slot>
          <Slot $w={94}><SiriBall /></Slot>
          <Clock $w={134}>Sun 7 Apr</Clock>
          <Clock $w={100} $ws={-3}>4:44 AM</Clock>
        </MenuRight>
      </MenuBar>

      <BrowserWindow>
        <TabStrip>
          <Lights><Light $c="#ff5f57" /><Light $c="#febc2e" /><Light $c="#28c840" /></Lights>
          <Tab $w={460}>
            <YouTube />
            <TabTitle $w={358} $fade>(8) Playlist 짙은 밤, 깊은 심연 속으</TabTitle>
            <Cross />
          </Tab>
          <Tab $active $w={464}>
            <Globe />
            <TabTitle $w={359}>Generate-Serial-Number</TabTitle>
            <Cross />
          </Tab>
          <NewTab><Plus /></NewTab>
          <TabSearch><ChevronDown /></TabSearch>
        </TabStrip>

        <Chrome>
          <Toolbar>
            <NavIcon $w={72}><Arrow /></NavIcon>
            <NavIcon $w={72} $dim><Arrow flip /></NavIcon>
            <NavIcon $w={72}><MdRefresh size={36} /></NavIcon>
            <Omnibox>
              <SiteInfo><MdOutlineInfo size={32} /></SiteInfo>
              <Url><b>127.0.0.1</b>:5500/Project/Generate-SerialNumber/index.html</Url>
              <MdStarBorder size={38} />
            </Omnibox>
            <Slot $w={72}><ColorRing /></Slot>
            <Slot $w={72}>
              <ExtBadged $bg="#43984a">
                <svg width="32" height="32" viewBox="0 0 32 32"><path d="M8 9h4v14H8zM14 9h6a6 6 0 0 1 0 12h-2v-4h-4z" fill="#fff" /></svg>
                <Count $bg="#e8554a">1</Count>
              </ExtBadged>
            </Slot>
            <Slot $w={72}>
              <svg width="32" height="28" viewBox="0 0 32 28"><path d="M0 0h11l5 9 5-9h11L16 28z" fill="#8d8d8d" /><path d="M6 0h6l4 7 4-7h6L16 18z" fill="#aaa" /></svg>
            </Slot>
            <Slot $w={72}><FTile>f?</FTile></Slot>
            <Slot $w={72}>
              <SerifN>N
                <svg width="12" height="28" viewBox="0 0 12 28" fill="none" stroke="#f0762b" strokeWidth="2"><path d="M1 1c4 0 5 2 5 4v18c0 2-1 4-5 4M11 1C7 1 6 3 6 5v18c0 2 1 4 5 4M3 14h6" /></svg>
              </SerifN>
            </Slot>
            <Slot $w={72}>
              <svg width="30" height="32" viewBox="0 0 30 32">
                <path d="M2 2h15l5 5v23H2z" fill="#44557a" /><path d="M4 3h10v26H4z" fill="#fff" /><path d="M14 7h9l4 4v18H14z" fill="#5b93e0" />
                <path d="M22 31l6-6v6z" fill="#fff" /><circle cx="18" cy="20" r="11" fill="#33435f" /><path d="M14 15l8 10M22 15l-8 10" stroke="#fff" strokeWidth="2.200" />
              </svg>
            </Slot>
            <Slot $w={72}>
              <svg width="32" height="32" viewBox="0 0 32 32">
                <path d="M16 0c6 0 8 5 8 8 5 2 5 10-1 10H9C3 18 3 10 8 8c0-3 2-8 8-8z" fill="#63c41c" />
                <path d="M16 6v18M16 14l5-4M16 16l-5-4" stroke="#e58a25" strokeWidth="2.400" />
                <path d="M2 24v7M6 24v7M2 27.500h4M8 25h6M11 25v6M16 31v-6l3 4 3-4v6M25 24v6h5" stroke="#1a0f0a" strokeWidth="2" fill="none" />
              </svg>
            </Slot>
            <Slot $w={72}>
              <ExtBadged $bg="#3f2db0">
                <svg width="32" height="32" viewBox="0 0 32 32"><path d="M6 25L19 8M13 8l4 8 5 3" stroke="#33e0d0" strokeWidth="4" fill="none" strokeLinecap="round" /></svg>
                <Count $bg="#fff" />
              </ExtBadged>
            </Slot>
            <Slot $w={72}>
              <svg width="32" height="32" viewBox="0 0 32 32">
                <rect width="32" height="32" fill="#fdf3e4" />
                <path d="M4 15C5 1 27 1 28 15" fill="#e8432e" /><path d="M6 16C7 5 25 5 26 16" fill="#f9a32c" />
                <path d="M4 17c2 14 22 14 24 0" fill="#2aa3df" />
                <path d="M3 17c7-8 19-8 26 0-7 7-19 7-26 0z" fill="#fdf3e4" stroke="#10223a" strokeWidth="1.800" />
                <circle cx="16" cy="16.500" r="5" fill="#10223a" /><circle cx="16" cy="16.500" r="1.800" fill="#6cc4ee" />
              </svg>
            </Slot>
            <Slot $w={76}><MdOutlineExtension size={40} /></Slot>
            <Slot $w={28}><svg width="4" height="32"><rect width="4" height="32" rx="2" fill="#5e5e5e" /></svg></Slot>
            <Slot $w={80}>
              <svg width="30" height="30" viewBox="0 0 30 30"><rect x="1.500" y="2.500" width="27" height="25" rx="2" fill="none" stroke="#c7c7c7" strokeWidth="3" /><rect x="18" y="2" width="11" height="26" fill="#c7c7c7" /></svg>
            </Slot>
            <Slot $w={64}>
              <Avatar>
                <svg width="40" height="40" viewBox="0 0 40 40">
                  <rect width="40" height="20" fill="#8fa3bb" /><path d="M0 7c8-3 12 2 20-1s14 0 20-1v9H0z" fill="#cfd6de" /><rect y="20" width="40" height="20" fill="#8a847b" /><rect y="17.500" width="40" height="3" fill="#4a5560" />
                  <circle cx="20" cy="14.500" r="2.600" fill="#4d3a30" /><path d="M16.500 18h7l2 10-1.500 1v11h-8V29l-1.500-1z" fill="#3a3636" />
                </svg>
              </Avatar>
            </Slot>
            <Slot $w={80}><MdMoreVert size={42} /></Slot>
          </Toolbar>
          <Bookmarks>
            {BOOKMARKS.map(b => (
              <Bookmark key={b.label} $w={b.w}>
                <BookmarkIcon $w={b.iw}>{b.icon}</BookmarkIcon>
                <BookmarkLabel $ls={b.ls}>{b.label}</BookmarkLabel>
              </Bookmark>
            ))}
            <Overflow>
              <svg width="22" height="18" viewBox="0 0 22 18" fill="none" stroke="#c7c7c7" strokeWidth="2.800"><path d="M2 1.500L9.500 9 2 16.500M12 1.500L19.500 9 12 16.500" /></svg>
            </Overflow>
          </Bookmarks>
        </Chrome>

        <Content>
          <AdColumn>
            <AdLabel>
              Remove advertising
              <svg width="24" height="24" viewBox="0 0 24 24"><circle cx="12" cy="12" r="12" fill="#fff" /><path d="M7.500 7.500l9 9M16.500 7.500l-9 9" stroke="#252a2e" strokeWidth="2.600" /></svg>
            </AdLabel>
            <AdBox />
          </AdColumn>

          <Phone>
            <SideKey $y={227} $h={43} />
            <SideKey $y={310} $h={84} />
            <SideKey $y={419} $h={84} />
            <SideKey $right $y={340} $h={134} />
            <Rim>
              <Screen>
                <StatusBar>
                  <span>4:43 AM</span>
                  <StatusRight>
                    <svg width="20" height="13" viewBox="0 0 20 13" fill="#f0f0f0"><rect y="8" width="3.600" height="5" rx="1" /><rect x="5.300" y="5.500" width="3.600" height="7.500" rx="1" /><rect x="10.600" y="3" width="3.600" height="10" rx="1" /><rect x="16" width="3.600" height="13" rx="1" /></svg>
                    5G
                    <svg width="31" height="16" viewBox="0 0 31 16" fill="#f0f0f0"><rect y="0.500" width="28" height="15" rx="3.500" /><path d="M29 5.500v5c2-.5 2-4.500 0-5z" /></svg>
                  </StatusRight>
                </StatusBar>
                <Page>
                  <Serial>{'Serial Number :\n2DpD-FuO-vQt-sun1'}</Serial>
                  <Generate>Generate Serial Number</Generate>
                  <Credit>
                    <CreditLine>Generate-Serial-Number</CreditLine>
                    <CreditLine>
                      Design By Ahmed Naguib
                      <svg width="29" height="29" viewBox="0 0 29 29"><circle cx="14.500" cy="14.500" r="14.500" fill="#fff" /><path d="M18.500 11a5.300 5.300 0 1 0 0 7" fill="none" stroke="#4266f8" strokeWidth="3.400" /></svg>
                    </CreditLine>
                  </Credit>
                </Page>
                <SafariBar>
                  <SafariUrl>
                    <TextSize>A<small>A</small></TextSize>
                    <Host>
                      <svg width="14" height="20" viewBox="0 0 14 20"><path d="M3.200 9V5.500a3.800 3.800 0 0 1 7.600 0V9" fill="none" stroke="#f0f0f0" strokeWidth="2" /><rect y="8.500" width="14" height="11.500" rx="2" fill="#f0f0f0" /></svg>
                      http://127.0.0.1:5500
                    </Host>
                    <svg width="24" height="30" viewBox="0 0 24 30" fill="none" stroke="#f0f0f0" strokeWidth="1.900" strokeLinecap="round"><path d="M15.500 7A10.800 10.800 0 1 0 22.800 17M11.500 1.500L17 7l-5.500 5.500" /></svg>
                  </SafariUrl>
                  <SafariNav>
                    <Slot $w={32}><svg width="15" height="28" viewBox="0 0 15 28" fill="none" stroke="#f0f0f0" strokeWidth="2"><path d="M14 1.500L2 14l12 12.500" /></svg></Slot>
                    <Slot $w={184}><svg width="15" height="28" viewBox="0 0 15 28" fill="none" stroke="#f0f0f0" strokeWidth="2"><path d="M1 1.500L13 14 1 26.500" /></svg></Slot>
                    <Slot $w={42}><svg width="28" height="40" viewBox="0 0 28 40" fill="none" stroke="#f0f0f0" strokeWidth="1.900"><path d="M9 11H4a3 3 0 0 0-3 3v17a3 3 0 0 0 3 3h20a3 3 0 0 0 3-3V14a3 3 0 0 0-3-3h-5M14 23V2M8.500 7.500L14 2l5.500 5.500" /></svg></Slot>
                    <Slot $w={196}><svg width="34" height="30" viewBox="0 0 34 30" fill="none" stroke="#f0f0f0" strokeWidth="1.900"><path d="M17 28V5C13-.2 5-.2 1 5v23c4-3.500 12-3.500 16 0zM17 28V5c4-5.200 12-5.200 16 0v23c-4-3.500-12-3.500-16 0z" /></svg></Slot>
                    <Slot $w={38}><svg width="33" height="34" viewBox="0 0 33 34" fill="none" stroke="#f0f0f0" strokeWidth="1.900"><rect x="8.500" y="8" width="23.500" height="23" rx="3" /><path d="M8 24H4a3 3 0 0 1-3-3V4a3 3 0 0 1 3-3h18a3 3 0 0 1 3 3v4" /></svg></Slot>
                  </SafariNav>
                  <HomeBar />
                </SafariBar>
              </Screen>
            </Rim>
            <Speaker />
            <Notch />
            <Camera />
            <Band $x={-1} $y={124} $w={7} $h={8} />
            <Band $x={597} $y={124} $w={7} $h={8} />
            <Band $x={-1} $y={1116} $w={7} $h={8} />
            <Band $x={597} $y={1116} $w={7} $h={8} />
            <Band $x={476} $y={-1} $w={8} $h={7} />
            <Band $x={121} $y={1241} $w={8} $h={7} />
          </Phone>

          <Tools>
            <Tool $h={82} $after={8}><MdCancel size={ICON} /></Tool>
            <Rule />
            <Tool $h={92}><MdDevices size={ICON} /><NewBadge>NEW</NewBadge></Tool>
            <Tool $h={80}><MdInfo size={ICON} /></Tool>
            <Tool $h={86} $down={2} $after={8}><MdRotateLeft size={ICON} /></Tool>
            <Rule />
            <Tool $h={88} $down={2}><MdPhotoCamera size={ICON} /></Tool>
            <Tool $h={84}><MdVideocam size={ICON} /></Tool>
            <Spacer />
            <Tool $h={100} $down={2}><MdWbSunny size={ICON} /></Tool>
            <Rule />
            <Tool $h={88}><MdShare size={ICON} /></Tool>
            <Tool $h={88} $after={4}><MdHelp size={ICON} /></Tool>
            <Rule />
            <Tool $h={88} $down={2}><MdSettings size={ICON} /></Tool>
          </Tools>
        </Content>
      </BrowserWindow>

      <Dock>
        {APP_LIST.map((a, i) => (
          <DockItem key={i}>
            {a.icon}
            {a.alert && <Alert>{a.alert}</Alert>}
            {a.running && <Running />}
          </DockItem>
        ))}
        <DockRule />
        <DockItem><Preview /></DockItem>
        <DockItem><TerminalApp /></DockItem>
        <DockItem><WpsApp size={66} /><Running /></DockItem>
        <DockRule />
        <DockItem><PhoneShot /></DockItem>
        <DockItem><WindowShotBox><WindowShot /><MiniWps><WpsApp size={26} /></MiniWps></WindowShotBox></DockItem>
        <DockItem><Trash /></DockItem>
      </Dock>
    </Desktop>
  );
}
